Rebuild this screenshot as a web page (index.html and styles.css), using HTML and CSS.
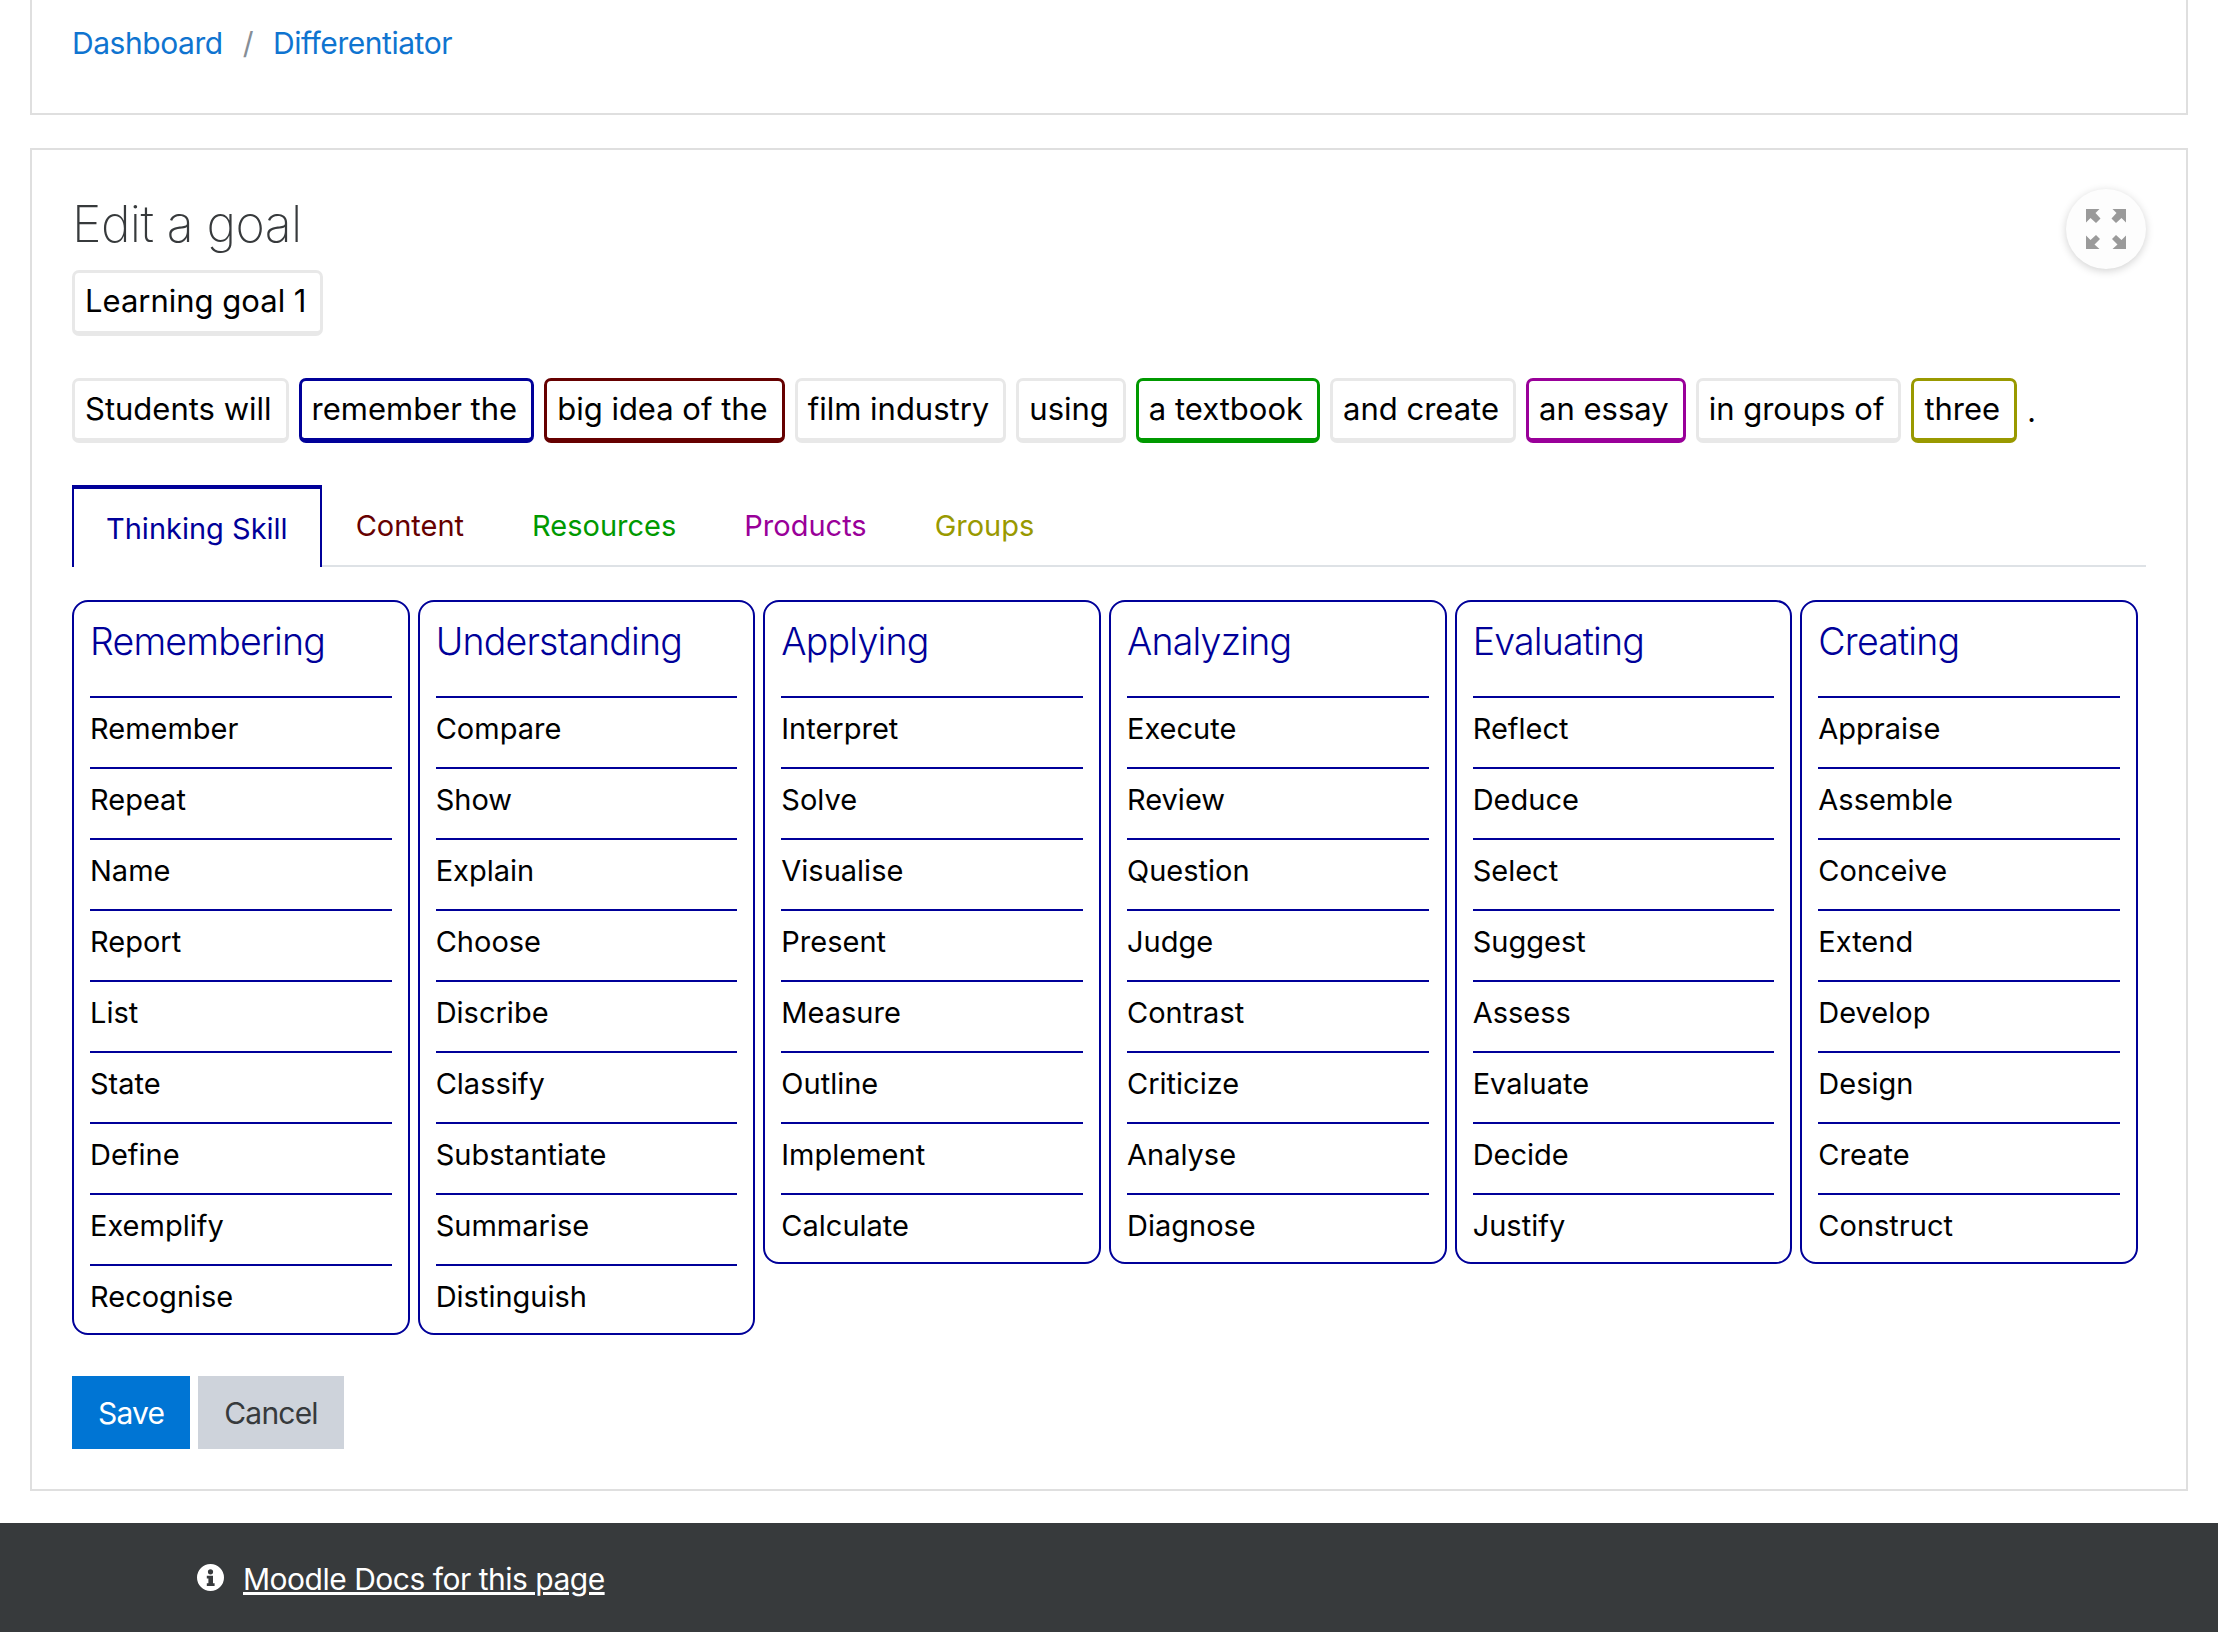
FILE: index.html
```html
<!DOCTYPE html>
<html lang="en">
<head>
    <meta charset="UTF-8">
    <title>Differentiator: Edit a goal</title>
    <link rel="stylesheet" href="styles.css">
</head>
<body>
    <div class="page">
        <div class="card crumb-card">
            <nav class="breadcrumb">
                <a href="#">Dashboard</a>
                <span class="crumb-sep">/</span>
                <a href="#">Differentiator</a>
            </nav>
        </div>

        <div class="card main-card">
            <button class="fullscreen-btn" aria-label="Full screen">
                <svg width="40" height="40" viewBox="0 0 40 40">
                    <path d="M0 0H13.5L9.5 4L14.5 9.5L10 14L4.5 9L0 13.5Z"/>
                    <path d="M40 0H26.5L30.5 4L25.5 9.5L30 14L35.5 9L40 13.5Z"/>
                    <path d="M0 40H13.5L8.5 35.5L14 30L10 26L4.5 31L0 26.5Z"/>
                    <path d="M40 40H26.5L31.5 35.5L26 30L30 26L35.5 31L40 26.5Z"/>
                </svg>
            </button>

            <h2 class="goal-title">Edit a goal</h2>
            <div class="goal-name"><span class="chip">Learning goal 1</span></div>

            <div class="sentence">
                <span class="chip">Students will</span>
                <span class="chip chip-skill">remember the</span>
                <span class="chip chip-content">big idea of the</span>
                <span class="chip">film industry</span>
                <span class="chip">using</span>
                <span class="chip chip-resources">a textbook</span>
                <span class="chip">and create</span>
                <span class="chip chip-products">an essay</span>
                <span class="chip">in groups of</span>
                <span class="chip chip-groups">three</span>
                <span class="full-stop">.</span>
            </div>

            <ul class="tabs">
                <li class="tab tab-skill active">Thinking Skill</li>
                <li class="tab tab-content">Content</li>
                <li class="tab tab-resources">Resources</li>
                <li class="tab tab-products">Products</li>
                <li class="tab tab-groups">Groups</li>
            </ul>

            <div class="skills">
                <div class="skill-col">
                    <h3>Remembering</h3>
                    <div class="skill">Remember</div>
                    <div class="skill">Repeat</div>
                    <div class="skill">Name</div>
                    <div class="skill">Report</div>
                    <div class="skill">List</div>
                    <div class="skill">State</div>
                    <div class="skill">Define</div>
                    <div class="skill">Exemplify</div>
                    <div class="skill">Recognise</div>
                </div>
                <div class="skill-col">
                    <h3>Understanding</h3>
                    <div class="skill">Compare</div>
                    <div class="skill">Show</div>
                    <div class="skill">Explain</div>
                    <div class="skill">Choose</div>
                    <div class="skill">Discribe</div>
                    <div class="skill">Classify</div>
                    <div class="skill">Substantiate</div>
                    <div class="skill">Summarise</div>
                    <div class="skill">Distinguish</div>
                </div>
                <div class="skill-col">
                    <h3>Applying</h3>
                    <div class="skill">Interpret</div>
                    <div class="skill">Solve</div>
                    <div class="skill">Visualise</div>
                    <div class="skill">Present</div>
                    <div class="skill">Measure</div>
                    <div class="skill">Outline</div>
                    <div class="skill">Implement</div>
                    <div class="skill">Calculate</div>
                </div>
                <div class="skill-col">
                    <h3>Analyzing</h3>
                    <div class="skill">Execute</div>
                    <div class="skill">Review</div>
                    <div class="skill">Question</div>
                    <div class="skill">Judge</div>
                    <div class="skill">Contrast</div>
                    <div class="skill">Criticize</div>
                    <div class="skill">Analyse</div>
                    <div class="skill">Diagnose</div>
                </div>
                <div class="skill-col">
                    <h3>Evaluating</h3>
                    <div class="skill">Reflect</div>
                    <div class="skill">Deduce</div>
                    <div class="skill">Select</div>
                    <div class="skill">Suggest</div>
                    <div class="skill">Assess</div>
                    <div class="skill">Evaluate</div>
                    <div class="skill">Decide</div>
                    <div class="skill">Justify</div>
                </div>
                <div class="skill-col">
                    <h3>Creating</h3>
                    <div class="skill">Appraise</div>
                    <div class="skill">Assemble</div>
                    <div class="skill">Conceive</div>
                    <div class="skill">Extend</div>
                    <div class="skill">Develop</div>
                    <div class="skill">Design</div>
                    <div class="skill">Create</div>
                    <div class="skill">Construct</div>
                </div>
            </div>

            <div class="actions">
                <button class="btn btn-save">Save</button>
                <button class="btn btn-cancel">Cancel</button>
            </div>
        </div>
    </div>

    <footer class="footer">
        <svg class="info-icon" width="27" height="27" viewBox="0 0 27 27">
            <path fill-rule="evenodd" d="M13.5 0a13.5 13.5 0 1 0 0 27a13.5 13.5 0 0 0 0-27ZM13.5 5.2a2.6 2.6 0 1 1 0 5.2a2.6 2.6 0 0 1 0-5.2ZM9.8 11.8H16V19.3H17.6V22H9.8V19.3H11.4V14.5H9.8Z"/>
        </svg>
        <a href="#" class="docs-link">Moodle Docs for this page</a>
    </footer>
</body>
</html>
```

FILE: styles.css
```css
html, body {
    margin: 0;
    height: 1632px;
    overflow: hidden;
}
body {
    background-color: #fff;
    font-family: Inter, "Noto Sans", sans-serif;
    font-size: 30px;
    color: #000;
}
a {
    text-decoration: none;
}
.page {
    padding: 0 30px;
}
.card {
    border: 2px solid #dfdfdf;
    box-sizing: border-box;
    background-color: #fff;
}
.crumb-card {
    border-top: none;
    height: 115px;
    margin-bottom: 33px;
    padding: 25px 40px 0;
}
.breadcrumb {
    display: flex;
    gap: 20px;
    line-height: 36px;
    letter-spacing: -0.45px;
}
.breadcrumb a {
    color: #0f74d0;
}
.crumb-sep {
    color: #868e96;
}
.main-card {
    position: relative;
    height: 1343px;
    padding: 44px 40px 0;
}
.fullscreen-btn {
    position: absolute;
    top: 39px;
    right: 40px;
    width: 80px;
    height: 80px;
    padding: 0;
    border: none;
    border-radius: 50%;
    background-color: #fdfdfd;
    box-shadow: 0 2px 8px rgba(0, 0, 0, 0.18);
    display: flex;
    align-items: center;
    justify-content: center;
}
.fullscreen-btn svg {
    fill: #9a9a9a;
}
.goal-title {
    margin: 0;
    font-size: 50px;
    font-weight: 200;
    line-height: 60px;
    letter-spacing: -0.6px;
    color: #373a3c;
}
.goal-name {
    display: flex;
    margin: 16px 0 42px;
}
.chip {
    box-sizing: border-box;
    height: 65px;
    padding: 0 14px 0 10px;
    border: 3px solid #e8e8e8;
    border-bottom-width: 5px;
    border-radius: 7px;
    font-size: 31px;
    line-height: 56px;
    white-space: nowrap;
}
.goal-name .chip {
    height: 66px;
}
.sentence {
    display: flex;
    align-items: center;
    gap: 10px;
}
.chip-skill { border-color: #000099; }
.chip-content { border-color: #660000; }
.chip-resources { border-color: #009900; }
.chip-products { border-color: #990099; }
.chip-groups { border-color: #999900; }
.tabs {
    display: flex;
    list-style: none;
    margin: 42px 0 33px;
    padding: 0;
    height: 82px;
    border-bottom: 2px solid #dee2e6;
    box-sizing: border-box;
    font-size: 29px;
}
.tab {
    padding: 0 34px;
    line-height: 82px;
}
.tab.active {
    box-sizing: border-box;
    height: 82px;
    padding: 0 32px;
    border: 2px solid #000099;
    border-top-width: 4px;
    border-bottom: none;
    line-height: 80px;
    background-color: #fff;
}
.tab-skill { color: #000099; }
.tab-content { color: #660000; }
.tab-resources { color: #009900; }
.tab-products { color: #990099; }
.tab-groups { color: #999900; }
.skills {
    display: grid;
    grid-template-columns: repeat(6, 1fr);
    align-items: start;
    gap: 8px;
    padding-right: 8px;
}
.skill-col {
    border: 2px solid #000099;
    border-radius: 16px;
    padding: 0 16px;
}
.skill-col h3 {
    box-sizing: border-box;
    margin: 0;
    height: 94px;
    padding-top: 12px;
    font-size: 37.5px;
    font-weight: 300;
    line-height: 56px;
    letter-spacing: -0.8px;
    color: #000099;
}
.skill {
    border-top: 2px solid #000099;
    padding-bottom: 7px;
    font-size: 29px;
    line-height: 62px;
}
.skill:last-child {
    padding-bottom: 5px;
}
.actions {
    display: flex;
    gap: 8px;
    margin-top: 41px;
}
.btn {
    height: 73px;
    padding: 0 26px;
    border: none;
    font-family: inherit;
    font-size: 30px;
    letter-spacing: -0.8px;
}
.btn-save {
    background-color: #0075d4;
    color: #fff;
}
.btn-cancel {
    background-color: #ced3db;
    color: #373a3c;
}
.footer {
    margin-top: 32px;
    height: 109px;
    background-color: #373a3c;
    display: flex;
    align-items: flex-start;
    gap: 19px;
    padding: 41px 0 0 197px;
    box-sizing: border-box;
}
.info-icon {
    fill: #fff;
}
.docs-link {
    color: #fff;
    text-decoration: underline;
    line-height: 30px;
    letter-spacing: -0.5px;
}
```
